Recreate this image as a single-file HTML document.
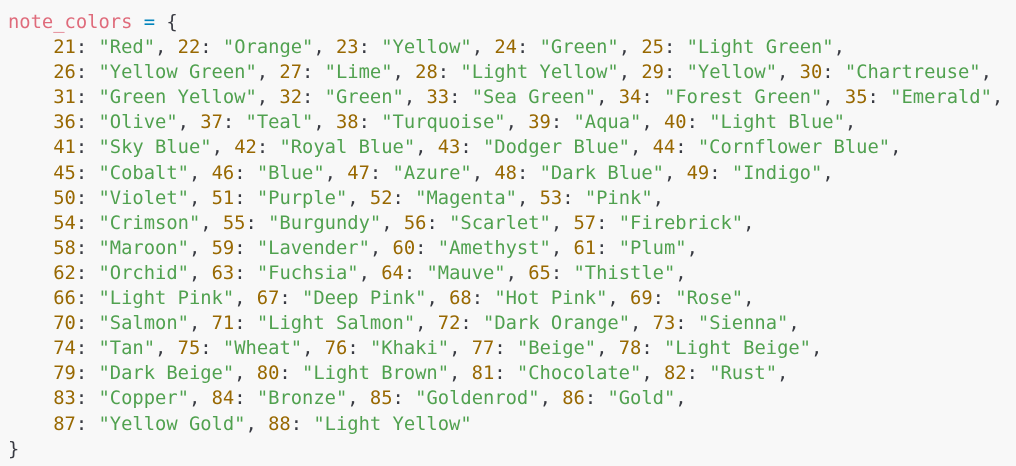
<!DOCTYPE html>
<html><head><style>
html,body{margin:0;padding:0;background:#f8f8f8;width:1016px;height:466px;overflow:hidden}
pre{margin:0;position:absolute;left:8px;top:10px;font-family:"DejaVu Sans Mono","Liberation Mono",monospace;font-size:18.8px;line-height:25.1px;color:#383a42}
.v{color:#df6b7b}.o{color:#0184bc}.n{color:#986801}.s{color:#50a14f}
</style></head><body><pre><span class="v">note_colors</span> <span class="o">=</span> {
    <span class="n">21</span>: <span class="s">"Red"</span>, <span class="n">22</span>: <span class="s">"Orange"</span>, <span class="n">23</span>: <span class="s">"Yellow"</span>, <span class="n">24</span>: <span class="s">"Green"</span>, <span class="n">25</span>: <span class="s">"Light Green"</span>,
    <span class="n">26</span>: <span class="s">"Yellow Green"</span>, <span class="n">27</span>: <span class="s">"Lime"</span>, <span class="n">28</span>: <span class="s">"Light Yellow"</span>, <span class="n">29</span>: <span class="s">"Yellow"</span>, <span class="n">30</span>: <span class="s">"Chartreuse"</span>,
    <span class="n">31</span>: <span class="s">"Green Yellow"</span>, <span class="n">32</span>: <span class="s">"Green"</span>, <span class="n">33</span>: <span class="s">"Sea Green"</span>, <span class="n">34</span>: <span class="s">"Forest Green"</span>, <span class="n">35</span>: <span class="s">"Emerald"</span>,
    <span class="n">36</span>: <span class="s">"Olive"</span>, <span class="n">37</span>: <span class="s">"Teal"</span>, <span class="n">38</span>: <span class="s">"Turquoise"</span>, <span class="n">39</span>: <span class="s">"Aqua"</span>, <span class="n">40</span>: <span class="s">"Light Blue"</span>,
    <span class="n">41</span>: <span class="s">"Sky Blue"</span>, <span class="n">42</span>: <span class="s">"Royal Blue"</span>, <span class="n">43</span>: <span class="s">"Dodger Blue"</span>, <span class="n">44</span>: <span class="s">"Cornflower Blue"</span>,
    <span class="n">45</span>: <span class="s">"Cobalt"</span>, <span class="n">46</span>: <span class="s">"Blue"</span>, <span class="n">47</span>: <span class="s">"Azure"</span>, <span class="n">48</span>: <span class="s">"Dark Blue"</span>, <span class="n">49</span>: <span class="s">"Indigo"</span>,
    <span class="n">50</span>: <span class="s">"Violet"</span>, <span class="n">51</span>: <span class="s">"Purple"</span>, <span class="n">52</span>: <span class="s">"Magenta"</span>, <span class="n">53</span>: <span class="s">"Pink"</span>,
    <span class="n">54</span>: <span class="s">"Crimson"</span>, <span class="n">55</span>: <span class="s">"Burgundy"</span>, <span class="n">56</span>: <span class="s">"Scarlet"</span>, <span class="n">57</span>: <span class="s">"Firebrick"</span>,
    <span class="n">58</span>: <span class="s">"Maroon"</span>, <span class="n">59</span>: <span class="s">"Lavender"</span>, <span class="n">60</span>: <span class="s">"Amethyst"</span>, <span class="n">61</span>: <span class="s">"Plum"</span>,
    <span class="n">62</span>: <span class="s">"Orchid"</span>, <span class="n">63</span>: <span class="s">"Fuchsia"</span>, <span class="n">64</span>: <span class="s">"Mauve"</span>, <span class="n">65</span>: <span class="s">"Thistle"</span>,
    <span class="n">66</span>: <span class="s">"Light Pink"</span>, <span class="n">67</span>: <span class="s">"Deep Pink"</span>, <span class="n">68</span>: <span class="s">"Hot Pink"</span>, <span class="n">69</span>: <span class="s">"Rose"</span>,
    <span class="n">70</span>: <span class="s">"Salmon"</span>, <span class="n">71</span>: <span class="s">"Light Salmon"</span>, <span class="n">72</span>: <span class="s">"Dark Orange"</span>, <span class="n">73</span>: <span class="s">"Sienna"</span>,
    <span class="n">74</span>: <span class="s">"Tan"</span>, <span class="n">75</span>: <span class="s">"Wheat"</span>, <span class="n">76</span>: <span class="s">"Khaki"</span>, <span class="n">77</span>: <span class="s">"Beige"</span>, <span class="n">78</span>: <span class="s">"Light Beige"</span>,
    <span class="n">79</span>: <span class="s">"Dark Beige"</span>, <span class="n">80</span>: <span class="s">"Light Brown"</span>, <span class="n">81</span>: <span class="s">"Chocolate"</span>, <span class="n">82</span>: <span class="s">"Rust"</span>,
    <span class="n">83</span>: <span class="s">"Copper"</span>, <span class="n">84</span>: <span class="s">"Bronze"</span>, <span class="n">85</span>: <span class="s">"Goldenrod"</span>, <span class="n">86</span>: <span class="s">"Gold"</span>,
    <span class="n">87</span>: <span class="s">"Yellow Gold"</span>, <span class="n">88</span>: <span class="s">"Light Yellow"</span>
}</pre></body></html>
